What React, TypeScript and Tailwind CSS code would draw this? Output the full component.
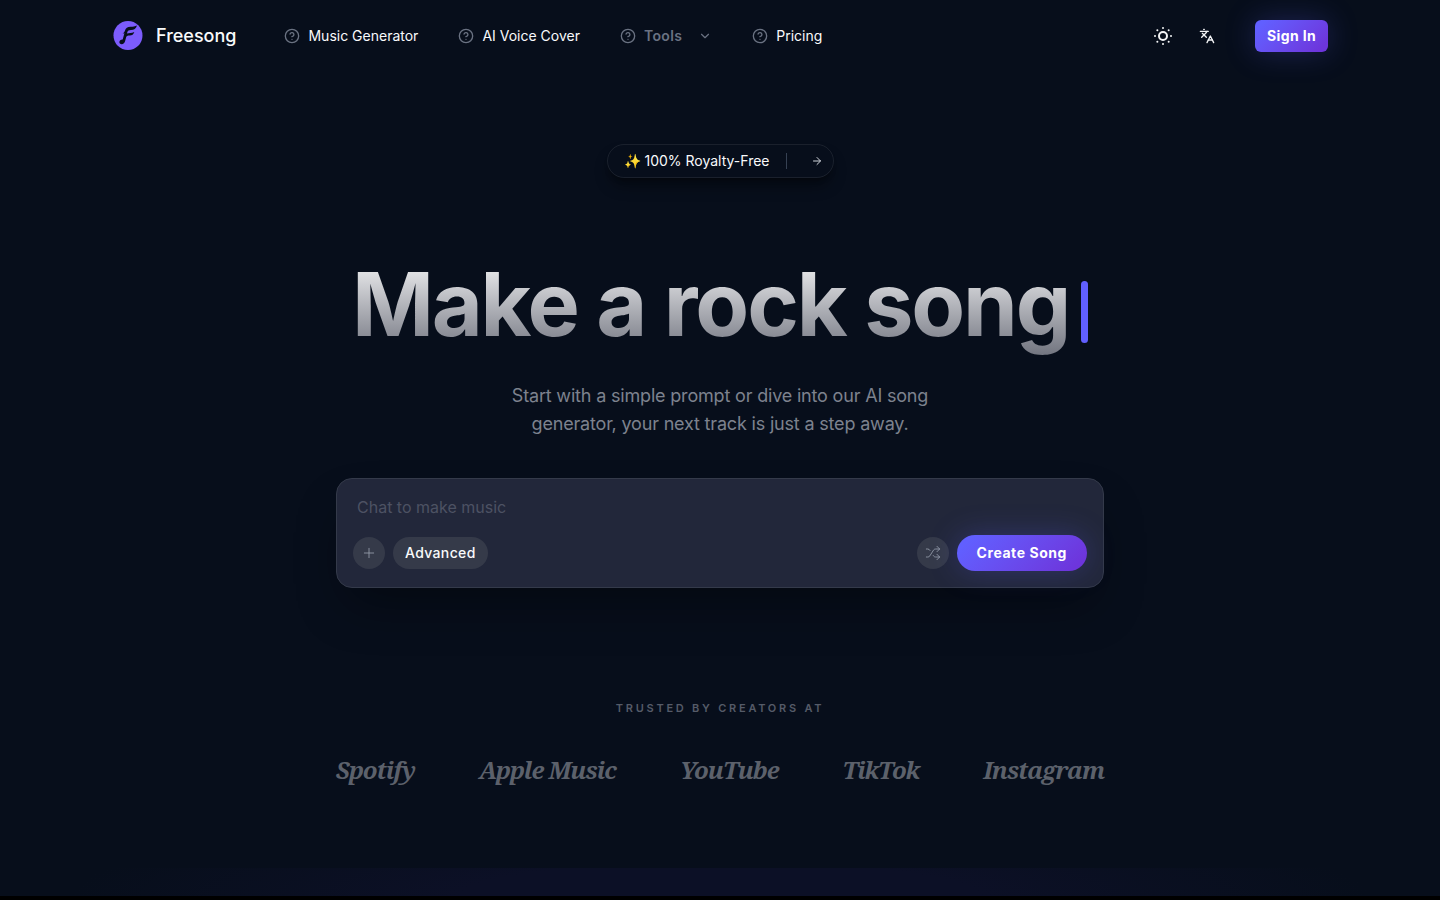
import { ArrowRight, ChevronDown, CircleHelp, Languages, Plus, Shuffle, SunDim } from "lucide-react";
import { useState } from "react";

const NavItems = [
  { name: "Music Generator", href: "#generator" },
  { name: "AI Voice Cover", href: "#voice-cover" },
  { name: "Tools", href: "#tools", hasMenu: true },
  { name: "Pricing", href: "#pricing" },
];

const Brands = ["Spotify", "Apple Music", "YouTube", "TikTok", "Instagram"];

function Logo() {
  return (
    <svg viewBox="0 0 32 32" className="size-8" aria-hidden="true">
      <circle cx="16" cy="15.5" r="14.5" fill="#7c5cfc" />
      <path
        d="M25 5.500C24 8.800 22 9.800 19 9.900C16.800 10 15.800 10.600 15.300 12.300L15 13.500C17 12.600 19.500 13.400 22.300 11.900C21.600 14.400 20 15.300 17.800 15.500C16 15.600 14.800 15.900 14.200 17L13.200 20.800C12.700 22.900 11.400 24.200 9.700 24.200C8.200 24.200 7.300 23.300 7.400 22C7.500 20.500 8.800 19.500 10.700 19.600L12.400 13.200L10.500 13.400C11.800 12.800 12.400 12.200 12.800 11C13.700 8 15.500 6.900 18.500 6.800C21 6.700 23 6.500 25 5.500Z"
        fill="#070e1b"
      />
    </svg>
  );
}

function Navbar() {
  return (
    <header className="w-full">
      <div className="max-w-[1216px] mx-auto h-[72px] flex items-center justify-between">
        <div className="flex items-center gap-12">
          <a href="/" className="flex items-center gap-3">
            <Logo />
            <span className="text-lg font-medium text-gray-50">Freesong</span>
          </a>
          <nav className="flex items-center gap-10">
            {NavItems.map((item) =>
              item.hasMenu ? (
                <button
                  key={item.name}
                  className="flex items-center gap-2 text-sm font-semibold tracking-wide text-gray-500 cursor-pointer"
                >
                  <CircleHelp className="size-4" />
                  {item.name}
                  <ChevronDown className="size-3.5 ml-2" />
                </button>
              ) : (
                <a key={item.name} href={item.href} className="flex items-center gap-2 text-sm text-gray-50">
                  <CircleHelp className="size-4 text-gray-500" />
                  {item.name}
                </a>
              )
            )}
          </nav>
        </div>
        <div className="flex items-center">
          <button aria-label="Toggle theme" className="text-gray-100 cursor-pointer">
            <SunDim className="size-6" />
          </button>
          <button aria-label="Change language" className="ml-6 text-gray-100 cursor-pointer">
            <Languages className="size-4" />
          </button>
          <button className="ml-10 h-8 px-3 rounded-md text-sm font-bold tracking-wide text-white bg-linear-135 from-[#615fff] from-10% to-[#6d35dc] to-90% shadow-[0_0_30px_rgba(97,95,255,0.25)] cursor-pointer">
            Sign In
          </button>
        </div>
      </div>
    </header>
  );
}

function PromptBox() {
  const [prompt, setPrompt] = useState("");

  return (
    <form
      onSubmit={(e) => e.preventDefault()}
      className="mt-10 w-full max-w-3xl rounded-2xl border border-[#343a4a] bg-[#22273a] p-4 shadow-2xl shadow-black/40"
    >
      <input
        type="text"
        aria-label="Song prompt"
        value={prompt}
        onChange={(e) => setPrompt(e.target.value)}
        placeholder="Chat to make music"
        className="block w-full h-6 px-1 text-base text-gray-50 placeholder:text-[#4d5263] bg-transparent outline-none"
      />
      <div className="mt-4 flex items-center justify-between">
        <div className="flex items-center gap-2">
          <button
            type="button"
            aria-label="Add"
            className="size-8 rounded-full bg-[#353a49] text-gray-400 flex items-center justify-center"
          >
            <Plus className="size-4" strokeWidth={1.25} />
          </button>
          <button type="button" className="h-8 px-3 rounded-full bg-[#353a49] text-sm font-medium tracking-wide text-gray-50">
            Advanced
          </button>
        </div>
        <div className="flex items-center gap-2">
          <button
            type="button"
            aria-label="Random prompt"
            className="size-8 rounded-full bg-[#353a49] text-gray-400 flex items-center justify-center"
          >
            <Shuffle className="size-4" strokeWidth={1.25} />
          </button>
          <button
            type="submit"
            className="h-9 px-5 rounded-full text-sm font-bold tracking-[0.04em] text-white bg-linear-135 from-[#615fff] from-10% to-[#6d35dc] to-90% shadow-[0_0_30px_rgba(97,95,255,0.25)]"
          >
            Create Song
          </button>
        </div>
      </div>
    </form>
  );
}

export default function App() {
  return (
    <div className="min-h-screen flex flex-col bg-[#070e1b] font-['Inter',sans-serif] text-gray-50">
      <Navbar />
      <main className="flex-1 flex flex-col items-center pt-[72px] px-6">
        <a
          href="#royalty-free"
          className="flex items-center h-[34px] pl-4 pr-2.5 rounded-full border border-white/8 text-sm shadow-lg shadow-black/40"
        >
          ✨ 100% Royalty-Free
          <span className="w-px h-4 ml-4 mr-6 bg-gray-700" />
          <ArrowRight className="size-3 text-gray-300" />
        </a>

        <h1 className="mt-[72px] flex items-center text-[88px] leading-[108px] font-bold tracking-tight">
          <span className="bg-linear-to-b from-white to-[#6f727d] bg-clip-text text-transparent">Make a rock song</span>
          <span className="w-[7px] h-[62px] ml-3 mt-4 rounded-full bg-[#615fff]" />
        </h1>

        <p className="mt-6 max-w-[440px] text-center text-lg leading-7 tracking-[-0.01em] text-[#7d828e]">
          Start with a simple prompt or dive into our AI song generator, your next track is just a step away.
        </p>

        <PromptBox />

        <section className="mt-28 flex flex-col items-center">
          <h2 className="text-[11px] leading-4 font-semibold tracking-[0.25em] text-[#555b68] uppercase">
            Trusted by creators at
          </h2>
          <ul className="mt-9 flex flex-wrap items-center justify-center gap-16 font-['Noto_Serif','Liberation_Serif',serif] text-2xl leading-9 font-bold italic tracking-[-1px] text-[#5c616b]">
            {Brands.map((brand) => (
              <li key={brand}>{brand}</li>
            ))}
          </ul>
        </section>
      </main>
      <div className="h-[32px] border-b-4 border-black bg-[radial-gradient(ellipse_45%_300%_at_50%_100%,#0c1026_40%,#070e1b_100%)]" />
    </div>
  );
}
